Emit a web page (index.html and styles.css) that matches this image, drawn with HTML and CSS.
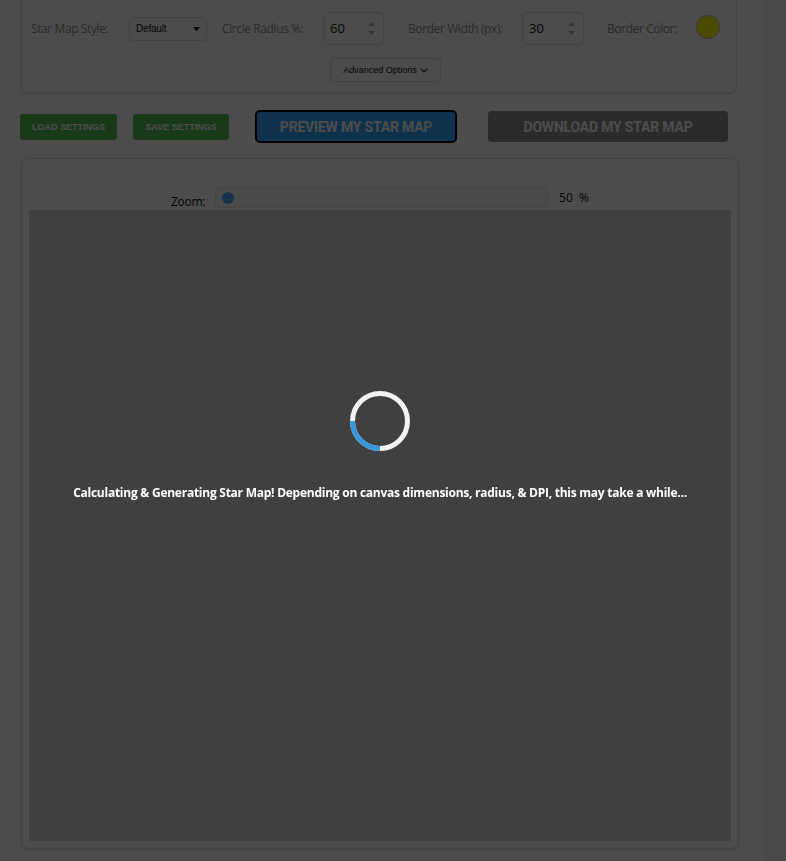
FILE: index.html
```html
<!DOCTYPE html>
<html lang="en">
<head>
<meta charset="utf-8">
<title>Star Map Generator</title>
<link rel="stylesheet" href="styles.css">
</head>
<body>
<div class="page">
  <main class="main">
    <section class="panel settings">
      <div class="field-row">
        <div class="field field--style">
          <span class="field-label">Star Map Style:</span>
          <div class="select">
            <span>Default</span>
            <svg class="select-caret" width="7" height="4" viewBox="0 0 7 4"><path d="M0 0H7L3.5 4Z" fill="#111"/></svg>
          </div>
        </div>
        <div class="field field--radius">
          <span class="field-label">Circle Radius %:</span>
          <div class="num-input">
            <span>60</span>
            <svg class="num-arrows" width="7" height="13" viewBox="0 0 7 13"><path d="M0 4L3.5 0L7 4Z" fill="#b0b0b0"/><path d="M0 9H7L3.5 13Z" fill="#b0b0b0"/></svg>
          </div>
        </div>
        <div class="field field--border">
          <span class="field-label">Border Width (px):</span>
          <div class="num-input num-input--wide">
            <span>30</span>
            <svg class="num-arrows" width="7" height="13" viewBox="0 0 7 13"><path d="M0 4L3.5 0L7 4Z" fill="#b0b0b0"/><path d="M0 9H7L3.5 13Z" fill="#b0b0b0"/></svg>
          </div>
        </div>
        <div class="field field--color">
          <span class="field-label">Border Color:</span>
          <span class="swatch"></span>
        </div>
      </div>
      <div class="advanced-row">
        <button class="btn-advanced" type="button">Advanced Options
          <svg width="8" height="5" viewBox="0 0 8 5"><path d="M0.6 0.6L4 4L7.4 0.6" fill="none" stroke="#111" stroke-width="1.2"/></svg>
        </button>
      </div>
    </section>

    <div class="actions">
      <button class="btn btn-green" type="button">LOAD SETTINGS</button>
      <button class="btn btn-green btn-save" type="button">SAVE SETTINGS</button>
      <button class="btn btn-preview" type="button">PREVIEW MY STAR MAP</button>
      <button class="btn btn-download" type="button">DOWNLOAD MY STAR MAP</button>
    </div>

    <section class="panel preview-panel">
      <div class="zoom-row">
        <span class="zoom-label">Zoom:</span>
        <div class="slider"><span class="slider-thumb"></span></div>
        <span class="zoom-value">50&nbsp; %</span>
      </div>
      <div class="canvas-area"></div>
    </section>
  </main>
  <aside class="side-strip"></aside>
</div>

<div class="loading-overlay">
  <svg class="spinner" width="60" height="60" viewBox="0 0 60 60">
    <circle cx="30" cy="30" r="27.5" fill="none" stroke="#f3f3f3" stroke-width="5"/>
    <circle cx="30" cy="30" r="27.5" fill="none" stroke="#3498db" stroke-width="5" stroke-dasharray="43.2 130" transform="rotate(90 30 30)"/>
  </svg>
  <p class="loading-text">Calculating &amp; Generating Star Map! Depending on canvas dimensions, radius, &amp; DPI, this may take a while...</p>
</div>
</body>
</html>
```

FILE: styles.css
```css
html, body {
  margin: 0;
  height: 100%;
}

body {
  font-family: "Open Sans", "Liberation Sans", sans-serif;
  background: #ffffff;
  color: #333;
  overflow: hidden;
}

.page {
  display: flex;
  min-height: 861px;
}

.main {
  width: 764px;
  flex: none;
  padding-left: 20px;
  box-sizing: border-box;
}

.side-strip {
  flex: 1;
  background: #f6f6f6;
  border-left: 1px solid #eeeeee;
}

.panel {
  background: #ffffff;
  border: 1px solid #e0e0e0;
  border-radius: 6px;
  box-shadow: 0 1px 2px rgba(0, 0, 0, 0.12);
  box-sizing: border-box;
}

/* settings panel */
.settings {
  margin-top: -30px;
  margin-left: 1px;
  width: 716px;
  padding: 41px 9px 10px;
}

.field-row {
  display: flex;
  align-items: center;
  height: 33px;
}

.field {
  display: flex;
  align-items: center;
  height: 100%;
}

.field-label {
  font-size: 12px;
  letter-spacing: -0.4px;
  color: #909090;
  white-space: nowrap;
  flex: none;
}

.field--style .field-label { width: 98px; }
.field--radius .field-label { width: 101px; }
.field--border .field-label { width: 114px; }
.field--color .field-label { width: 89px; }

.field--style { margin-right: 15px; }
.field--radius { margin-right: 24px; }
.field--border { margin-right: 23px; }

.select {
  width: 78px;
  height: 24px;
  box-sizing: border-box;
  border: 1px solid #dedede;
  border-radius: 4px;
  padding: 0 6px 0 6px;
  display: flex;
  align-items: center;
  justify-content: space-between;
  font: 10px "Liberation Sans", Arial, sans-serif;
  letter-spacing: -0.2px;
  color: #151515;
}

.num-input {
  width: 61px;
  height: 33px;
  box-sizing: border-box;
  border: 1px solid #dedede;
  border-radius: 4px;
  padding: 0 8px 1px 6px;
  display: flex;
  align-items: center;
  justify-content: space-between;
  font-size: 13px;
  color: #111;
}

.num-input--wide {
  width: 62px;
}

.swatch {
  width: 24px;
  height: 24px;
  box-sizing: border-box;
  border-radius: 50%;
  background: #ffff00;
  border: 1px solid #b5b5b5;
  align-self: flex-start;
  margin-top: 3px;
}

.advanced-row {
  display: flex;
  justify-content: center;
  padding-left: 13px;
  margin-top: 13px;
}

.btn-advanced {
  width: 111px;
  height: 24px;
  box-sizing: border-box;
  background: #ffffff;
  border: 1px solid #dedede;
  border-radius: 4px;
  font: 9px "Liberation Sans", Arial, sans-serif;
  color: #151515;
  display: flex;
  align-items: center;
  justify-content: center;
  gap: 3px;
  padding: 0;
}

/* action buttons */
.actions {
  display: flex;
  align-items: center;
  margin-top: 17px;
  height: 33px;
}

.btn {
  border: 0;
  padding: 0;
  color: #ffffff;
  font-family: "Liberation Sans", Arial, sans-serif;
  font-weight: 700;
  cursor: pointer;
  box-sizing: border-box;
}

.btn-green {
  width: 97px;
  height: 26px;
  background: #52c252;
  border-radius: 3px;
  font-size: 9px;
}

.btn-save {
  width: 96px;
  margin-left: 16px;
}

.btn-preview {
  width: 202px;
  height: 33px;
  margin-left: 26px;
  background: #33a9ff;
  border: 2px solid #000000;
  border-radius: 5px;
  font-family: Roboto, "Liberation Sans", sans-serif;
  font-size: 14px;
  letter-spacing: -0.2px;
}

.btn-download {
  width: 240px;
  height: 31px;
  margin-left: 31px;
  background: #8f8f8f;
  border-radius: 4px;
  font-family: Roboto, "Liberation Sans", sans-serif;
  font-size: 14px;
  letter-spacing: -0.2px;
}

/* preview panel */
.preview-panel {
  margin-top: 15px;
  margin-left: 1px;
  width: 718px;
  height: 691px;
  padding: 28px 7px 7px;
}

.zoom-row {
  display: flex;
  align-items: center;
  justify-content: center;
  height: 21px;
  margin-bottom: 2px;
}

.zoom-label {
  font-size: 12px;
  letter-spacing: -0.3px;
  color: #111;
  margin-right: 10px;
  padding-top: 8px;
}

.slider {
  width: 333px;
  height: 21px;
  box-sizing: border-box;
  border: 1px solid #e6e6e6;
  border-radius: 5px;
  background: #f7f7f7;
  display: flex;
  align-items: center;
  padding-left: 6px;
}

.slider-thumb {
  width: 12px;
  height: 12px;
  border-radius: 50%;
  background: #4aa3ff;
}

.zoom-value {
  margin-left: 11px;
  font-size: 12px;
  color: #111;
  white-space: pre;
}

.canvas-area {
  height: 631px;
  background: #d5d5d5;
}

/* loading overlay */
.loading-overlay {
  position: fixed;
  inset: 0;
  background: rgba(0, 0, 0, 0.7);
  display: flex;
  flex-direction: column;
  align-items: center;
  padding: 391px 26px 0 0;
  box-sizing: border-box;
}

.spinner {
  display: block;
}

.loading-text {
  margin: 34px 0 0;
  color: #ffffff;
  font-family: "Open Sans", sans-serif;
  font-weight: 700;
  font-size: 12px;
  letter-spacing: -0.25px;
  line-height: 16px;
  white-space: nowrap;
}
```
